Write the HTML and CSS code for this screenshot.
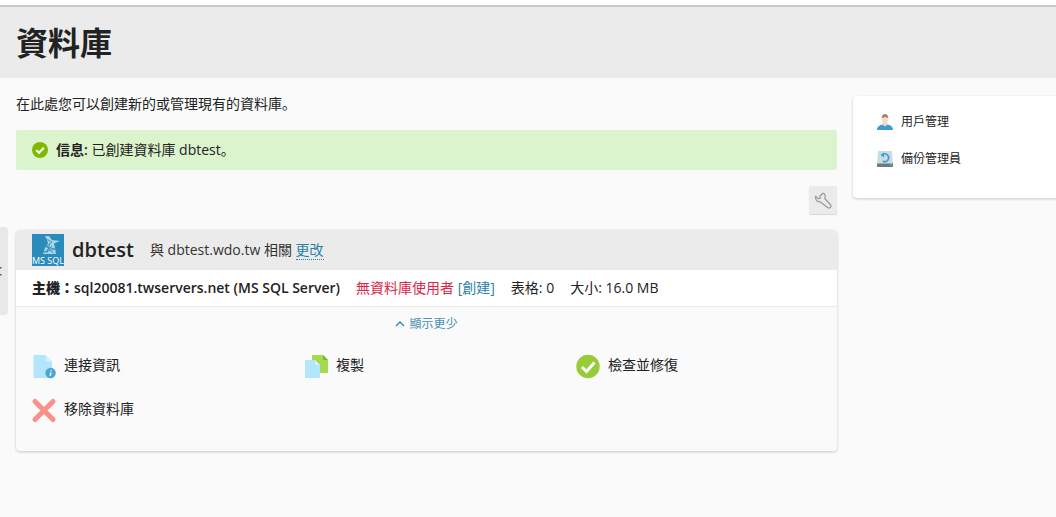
FILE: index.html
```html
<!DOCTYPE html>
<html>
<head>
<meta charset="utf-8">
<title>資料庫</title>
<link rel="stylesheet" href="styles.css">
</head>
<body>
<div class="topbar"></div>
<header class="page-head"><h1>資料庫</h1></header>
<div class="edge-tab"><svg viewBox="0 0 2 9" width="2" height="9"><path d="M0 0h1.500v1.500H0ZM0 7h1.500v1.500H0Z" fill="#555"/></svg></div>
<div class="layout">
  <main class="main">
    <p class="intro">在此處您可以創建新的或管理現有的資料庫。</p>
    <div class="msg">
      <svg class="msg-icon" viewBox="0 0 16 16"><circle cx="8" cy="8" r="8" fill="#80b904"/><path d="M4.300 8.200 7 10.800l4.800-5" fill="none" stroke="#fff" stroke-width="2"/></svg>
      <span><b class="msg-label">信息:</b> 已創建資料庫 dbtest。</span>
    </div>
    <div class="tools">
      <button class="tool-btn" aria-label="工具">
        <svg viewBox="0 0 28 28" width="28" height="28"><path d="M14 7.200 10.800 10.200l.4 2.100-2.200.3-2.400-2.400C6 13 7.500 16 11 15.800l8 6c1.500 1 3.800-.8 2.800-2.800l-6-6.500c1-3 .2-5-1.800-5.300Z" fill="none" stroke="#999" stroke-width="1.200" stroke-linejoin="round"/></svg>
      </button>
    </div>
    <section class="card">
      <div class="card-head">
        <svg class="mssql" viewBox="0 0 32 32"><rect width="32" height="32" fill="#2b8cbb"/><path d="M13 2h4l3 4 8 1-6 2.500L23 14l1 6H11l2-6 3-4.500-1-3.500Z" fill="#a9d3e7"/><path d="M14 5l6 3-6 5 9 2-11 3M18 9l-3 10M15 12l6 7M20 12l-8 7" fill="none" stroke="#2b8cbb" stroke-width=".8"/><text x="16" y="30" class="mssql-text">MS SQL</text></svg>
        <span class="db-name">dbtest</span>
        <span class="db-rel">與 dbtest.wdo.tw 相關 <a class="dotted">更改</a></span>
      </div>
      <div class="card-info">
        <span class="host"><b>主機：</b>sql20081.twservers.net (MS SQL Server)</span>
        <span class="nouser"><span class="red">無資料庫使用者</span> <a class="link">[創建]</a></span>
        <span class="stat">表格: 0</span>
        <span class="stat">大小: 16.0 MB</span>
      </div>
      <div class="toggle">
        <svg viewBox="0 0 10 6" width="10" height="6"><path d="M1 5l4-4 4 4" fill="none" stroke="#2a86b4" stroke-width="1.300"/></svg>
        <a class="toggle-text">顯示更少</a>
      </div>
      <div class="actions">
        <div class="action">
          <svg class="a-icon" viewBox="0 0 24 24"><path d="M1.500 2h12l6.500 6.500V25H1.500Z" fill="#b3e5fc"/><path d="M13.500 2 20 8.500h-6.500Z" fill="#d8f0fb"/><circle cx="18.600" cy="20" r="5.200" fill="#4fa5d6"/><path d="M19.200 17.300v1M18.900 19.500l-.7 3.400" stroke="#fff" stroke-width="1.400"/></svg>
          <span>連接資訊</span>
        </div>
        <div class="action">
          <svg class="a-icon" viewBox="0 0 24 24"><path d="M8 2h11l5 5v13H8Z" fill="#a5d94f"/><path d="M19 2l5 5h-5Z" fill="#7eb52e"/><path d="M1 7h10l5 5v13H1Z" fill="#b3e5fc"/><path d="M11 7l5 5h-5Z" fill="#d8f0fb"/></svg>
          <span>複製</span>
        </div>
        <div class="action">
          <svg class="a-icon" viewBox="0 0 24 24"><circle cx="12" cy="13.500" r="11.700" fill="#97cb37"/><path d="M6 14l4.500 4.500 8-9" fill="none" stroke="#fff" stroke-width="3"/></svg>
          <span>檢查並修復</span>
        </div>
        <div class="action">
          <svg class="a-icon" viewBox="0 0 24 24"><path d="M3 4.500l18 18M21 4.500l-18 18" stroke="#fb8f8a" stroke-width="5" stroke-linecap="round"/></svg>
          <span>移除資料庫</span>
        </div>
      </div>
    </section>
  </main>
  <aside class="side">
    <a class="side-item">
      <svg class="s-icon" viewBox="0 0 16 16"><path d="M0 16c0-3.500 3-5 5.500-5.500L8 12l2.500-1.500C13 11 16 12.500 16 16Z" fill="#3c9ccb"/><path d="M5.500 10.500 8 12.500l2.500-2V8h-5Z" fill="#f4d6c4"/><ellipse cx="8" cy="4.800" rx="3.200" ry="4.400" fill="#f6dccc"/><path d="M4.700 4.500C4.500 1.500 6 0 8 0s3.500 1.500 3.300 4.500C10.500 2.800 6 2.800 4.700 4.500Z" fill="#a5836e"/></svg>
      <span>用戶管理</span>
    </a>
    <a class="side-item">
      <svg class="s-icon" viewBox="0 0 16 16"><path d="M2 0h12c.6 0 1 .4 1 1l1 12H0L1 1c0-.6.4-1 1-1Z" fill="#c9dce6"/><path d="M0 12.500h16V15c0 .6-.4 1-1 1H1c-.6 0-1-.4-1-1Z" fill="#6c7a80"/><rect x="13" y="13.500" width="1.500" height="1.200" fill="#9c3"/><path d="M5.500 3.800A3.800 3.800 0 1 1 5.800 10" fill="none" stroke="#3c9ccb" stroke-width="1.500"/><path d="M7 1.500v5L3.500 4Z" fill="#3c9ccb"/></svg>
      <span>備份管理員</span>
    </a>
  </aside>
</div>
</body>
</html>
```
FILE: styles.css
```css
* { box-sizing: border-box; }
html, body { margin: 0; height: 100%; overflow: hidden; }
body {
  background: #fafafa;
  color: #222;
  font-family: "Open Sans", "Noto Sans CJK JP", sans-serif;
  font-size: 14px;
  line-height: 20px;
  position: relative;
}
.topbar { height: 7px; background: #fff; border-bottom: 2px solid #c9c9c9; }
.page-head { height: 71px; background: #ebebeb; padding: 16px 16px 0; }
.page-head h1 { margin: 0; font-size: 32px; line-height: 40px; font-weight: 700; color: #222; }
.edge-tab {
  position: absolute; left: 0; top: 227px; width: 8px; height: 88px;
  background: #e8e8e8; border-radius: 0 4px 4px 0;
  display: flex; align-items: center;
}
.layout { display: flex; gap: 16px; padding: 16px 0 0 16px; width: 1200px; }
.main { width: 821px; flex: none; }
.side {
  width: 300px; height: 102px; flex: none; margin-top: 2px;
  background: #fff; border-radius: 4px; box-shadow: 0 1px 3px rgba(0,0,0,.2);
  padding: 8px 24px; font-size: 12px;
  display: flex; flex-direction: column; gap: 1px;
}
.side-item { display: flex; align-items: center; gap: 8px; height: 36px; }
.s-icon { width: 16px; height: 16px; flex: none; }
.intro { margin: 0; height: 36px; font-size: 14px; }
.msg {
  height: 40px; background: #dcf4cd; border-radius: 2px; padding: 0 16px;
  display: flex; align-items: center; gap: 8px;
}
.msg-icon { width: 16px; height: 16px; flex: none; }
.msg-label { font-weight: 600; }
.tools { display: flex; justify-content: flex-end; padding-top: 16px; height: 60px; }
.tool-btn {
  width: 28px; height: 28px; padding: 0; border: 0; background: #ebebeb; border-radius: 2px;
  box-shadow: 0 1px 1px rgba(0,0,0,.15); display: flex;
}
.card { height: 221px; border-radius: 4px; box-shadow: 0 1px 3px rgba(0,0,0,.2); background: #fafafa; }
.card-head {
  height: 40px; background: #ebebeb; border-radius: 4px 4px 0 0; padding: 4px 16px;
  display: flex; align-items: center;
}
.mssql { width: 32px; height: 32px; flex: none; }
.mssql-text { font-size: 9px; fill: #fff; text-anchor: middle; font-family: "Open Sans", sans-serif; }
.db-name { font-size: 20px; font-weight: 600; margin-left: 8px; }
.db-rel { margin-left: 16px; color: #333; }
.dotted { color: #2a7fa8; border-bottom: 1px dotted #2a7fa8; }
.card-info {
  height: 37px; background: #fff; border-bottom: 1px solid #ebebeb; padding: 0 16px;
  display: flex; align-items: center;
}
.host { font-weight: 600; }
.nouser { margin-left: 16px; }
.red { color: #d8274b; }
.link { color: #2a7fa8; }
.stat { margin-left: 16px; }
.toggle {
  height: 34px; display: flex; align-items: center; justify-content: center; gap: 4px; font-size: 12px;
}
.toggle-text { color: #4a8fb5; }
.actions {
  display: grid; grid-template-columns: repeat(3, 272px); padding: 12px 16px 0; row-gap: 20px;
}
.action { display: flex; align-items: center; gap: 8px; height: 24px; }
.a-icon { width: 24px; height: 24px; flex: none; overflow: visible; }
```
